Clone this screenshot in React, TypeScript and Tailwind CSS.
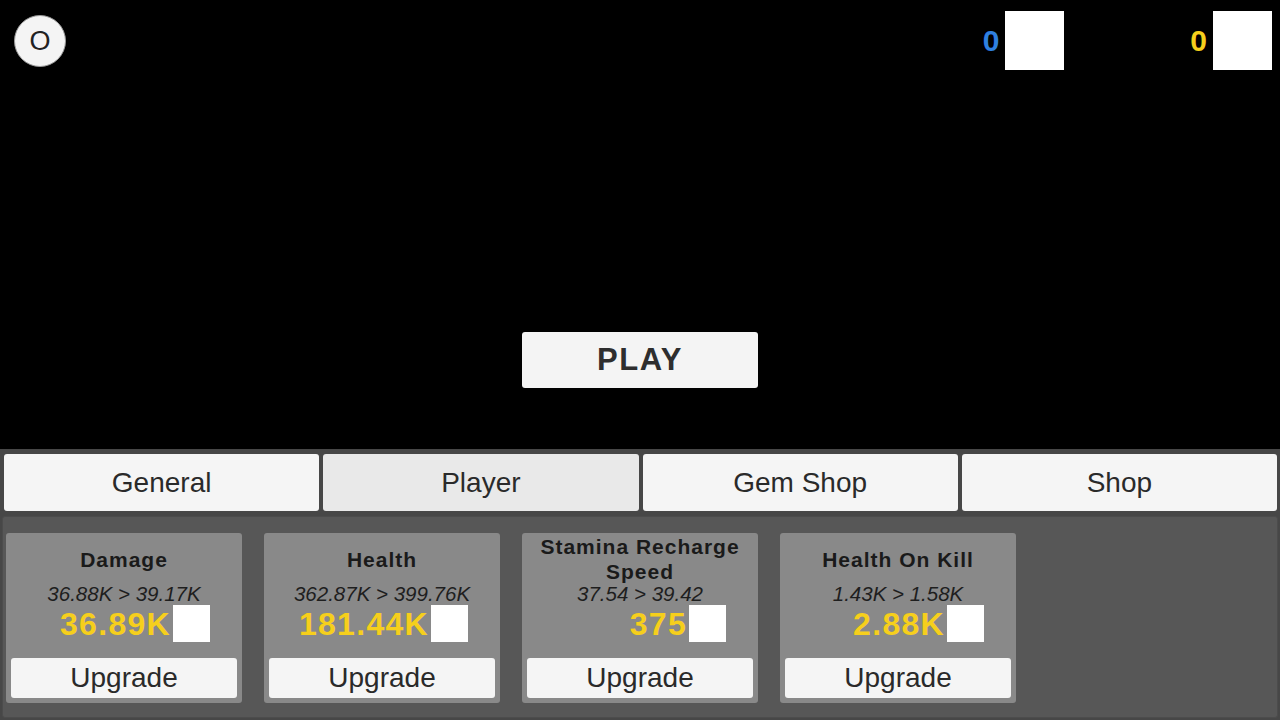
import React, { useState } from 'react';

interface StatCardProps {
  title: string;
  preview: string;
  cost: string;
}

const tabs = ['General', 'Player', 'Gem Shop', 'Shop'];

const stats: StatCardProps[] = [
  { title: 'Damage', preview: '36.88K > 39.17K', cost: '36.89K' },
  { title: 'Health', preview: '362.87K > 399.76K', cost: '181.44K' },
  { title: 'Stamina Recharge Speed', preview: '37.54 > 39.42', cost: '375' },
  { title: 'Health On Kill', preview: '1.43K > 1.58K', cost: '2.88K' },
];

const StatCard: React.FC<StatCardProps> = ({ title, preview, cost }) => {
  return (
    <div className="w-[236px] h-[170px] rounded-[3px] bg-[#898989] px-[5px] flex flex-col">
      {/* title block keeps a fixed height so two-line names wrap around the same center */}
      <div className="mt-px h-[50px] flex items-center justify-center text-center text-[21px] leading-[25px] font-bold tracking-[1px] text-[#1a1a1a]">
        {title}
      </div>
      <div className="mt-px h-[17px] flex items-center justify-center text-[20.5px] leading-[17px] italic text-[#1e1e1e] whitespace-nowrap">
        {preview}
      </div>
      <div className="mt-[3px] h-[37px] flex items-center">
        <div className="w-[160px] text-right text-[32px] font-bold tracking-[1.3px] text-[#f6cf1c] leading-none">
          {cost}
        </div>
        <div className="ml-[2px] w-[37px] h-[37px] bg-white" />
      </div>
      <button className="mt-[16px] h-[40px] rounded-[3px] bg-[#f5f5f5] text-[28px] text-[#2a2a2a] leading-none">
        Upgrade
      </button>
    </div>
  );
};

const App: React.FC = () => {
  const [activeTab, setActiveTab] = useState('Player');

  return (
    <div
      className="w-[1280px] h-[720px] bg-black flex flex-col overflow-hidden"
      style={{ fontFamily: '"Liberation Sans", Arial, sans-serif' }}
    >
      <div className="h-[449px] flex flex-col">
        <div className="h-[70px] flex justify-between items-start">
          <button className="mt-[15px] ml-[14px] w-[52px] h-[52px] rounded-full bg-[#f4f4f4] border border-[#9a9a9a] flex items-center justify-center text-[27px] text-[#222] leading-none">
            O
          </button>
          <div className="mt-[11px] mr-[8px] flex gap-[126px]">
            <div className="flex items-center gap-[6px]">
              <span className="text-[30px] font-bold text-[#2f80e0] leading-none">0</span>
              <div className="w-[59px] h-[59px] bg-white" />
            </div>
            <div className="flex items-center gap-[6px]">
              <span className="text-[30px] font-bold text-[#f6cf1c] leading-none">0</span>
              <div className="w-[59px] h-[59px] bg-white" />
            </div>
          </div>
        </div>
        <button className="mt-[262px] self-center w-[236px] h-[56px] rounded-[3px] bg-[#f4f4f4] text-[31px] font-bold tracking-[1.5px] text-[#2e2e2e]">
          PLAY
        </button>
      </div>

      <div className="flex-1 bg-[#474747] flex flex-col">
        <div className="pt-[5px] pl-[4px] pr-[3px] grid grid-cols-4 gap-[4px]">
          {tabs.map((tab) => (
            <button
              key={tab}
              onClick={() => setActiveTab(tab)}
              className={
                'h-[57px] rounded-[3px] text-[28px] text-[#2a2a2a] ' +
                (activeTab === tab ? 'bg-[#e9e9e9]' : 'bg-[#f5f5f5]')
              }
            >
              {tab}
            </button>
          ))}
        </div>
        <div className="mt-[5px] mx-[2px] h-[202px] rounded-[3px] border border-[#4c4c4c] bg-[#575757] pt-[16px] px-[3px] flex gap-[22px]">
          {stats.map((s) => (
            <StatCard key={s.title} {...s} />
          ))}
        </div>
      </div>
    </div>
  );
};

export default App;
